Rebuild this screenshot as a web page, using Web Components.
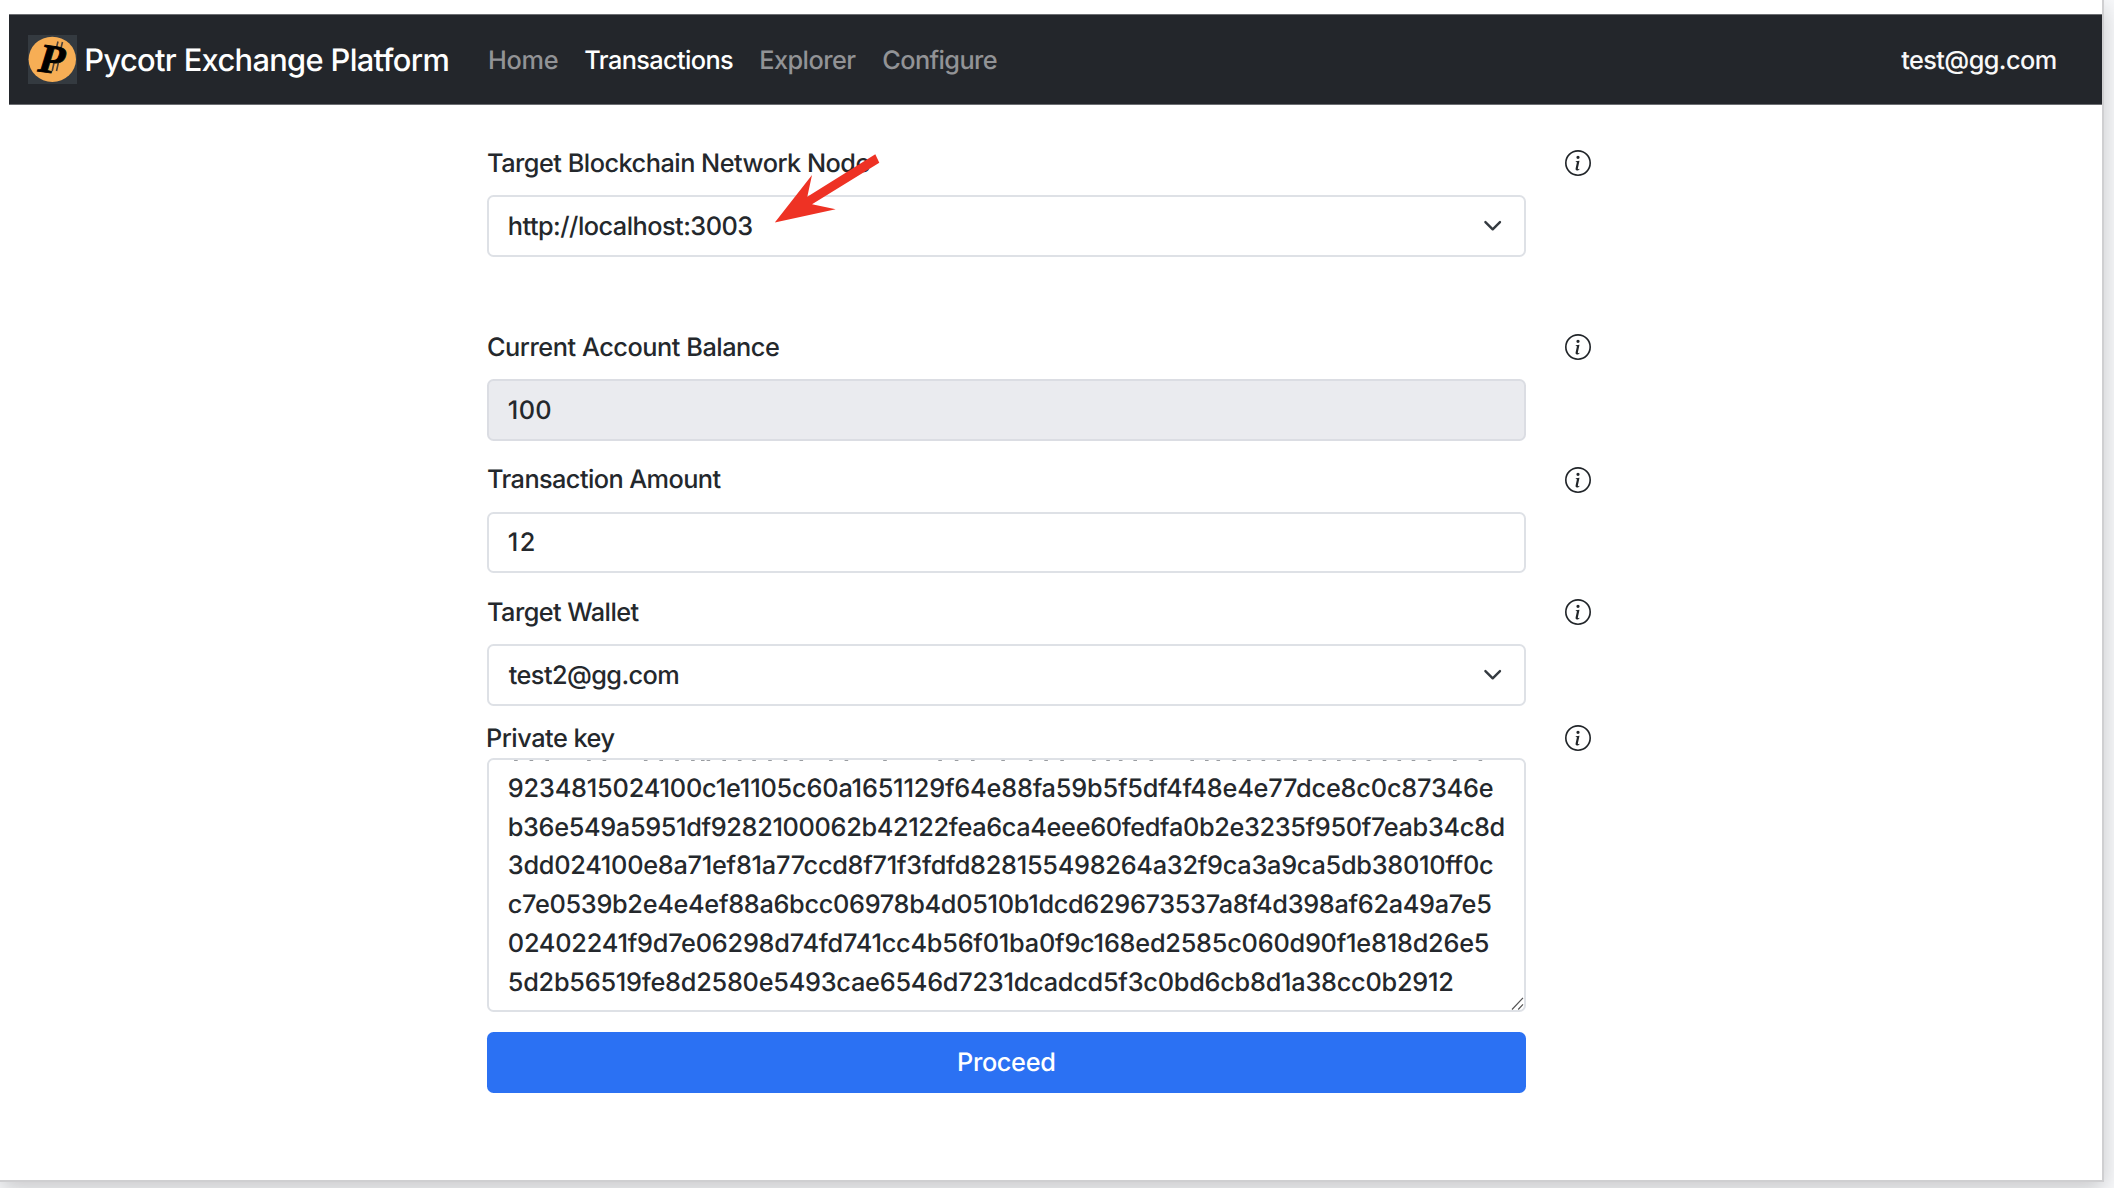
<!DOCTYPE html>
<html lang="en"><head><meta charset="utf-8"><title>Pycotr Exchange Platform</title>
<style>
html,body{margin:0;height:100%;overflow:hidden;background:#f8f9fb}
body{font:450 25.3px/38.77px Inter,sans-serif;color:#24282c;text-rendering:geometricPrecision}
</style></head><body>
<pycotr-app></pycotr-app>
<script>
const define=(name,html,init)=>customElements.define(name,class extends HTMLElement{
  connectedCallback(){
    if(this.shadowRoot)return;
    const t=document.createElement('template');t.innerHTML=typeof html==='function'?html(this):html;
    this.attachShadow({mode:'open'}).append(t.content.cloneNode(true));
    if(init)init(this);
  }
});

// Single line of text tracked to a given ink width.
const ctx=document.createElement('canvas').getContext('2d');
define('text-run','<style>:host{display:block;white-space:pre;font-kerning:normal;transform:translate(.7px,1.4px)}</style><slot></slot>',el=>{
  const cs=getComputedStyle(el),s=el.textContent,w=+el.getAttribute('w');
  ctx.font=`${cs.fontWeight} ${cs.fontSize} Inter, sans-serif`;
  const m=ctx.measureText(s),ls=(w-m.actualBoundingBoxLeft-m.actualBoundingBoxRight)/(s.length-1);
  el.style.letterSpacing=ls.toFixed(3)+'px';
  el.style.marginLeft=m.actualBoundingBoxLeft.toFixed(2)+'px';
  el.style.width=(w+4)+'px';
});

define('info-icon',`<style>:host{display:block;width:26px;height:26px}svg{display:block}</style>
<svg width="26" height="26" viewBox="0 0 16 16" fill="#212529"><path d="M8 15A7 7 0 1 1 8 1a7 7 0 0 1 0 14zm0 1A8 8 0 1 0 8 0a8 8 0 0 0 0 16z"/><path d="m8.93 6.588-2.29.287-.082.38.45.083c.294.07.352.176.288.469l-.738 3.468c-.194.897.105 1.319.808 1.319.545 0 1.178-.252 1.465-.598l.088-.416c-.2.176-.492.246-.686.246-.275 0-.375-.193-.304-.533L8.93 6.588zM9 4.5a1 1 0 1 1-2 0 1 1 0 0 1 2 0z"/></svg>`);

define('coin-logo',`<style>:host{display:block;width:48.6px;height:48.4px;background:#343a40}svg{display:block}</style>
<svg width="48.6" height="48.4" viewBox="0 0 48.6 48.4"><ellipse cx="24.3" cy="24.3" rx="23.7" ry="22.6" fill="#f7ae55"/>
<g stroke="#4a4038" stroke-width="1.6" fill="none"><path d="M30 6.5l-1.5 6M34.5 7l-1.5 6M26 28l-1.8 8M30.3 28l-1.8 8"/></g>
<text transform="translate(8.2 36) rotate(8) skewX(-9)" font-family="Liberation Serif,serif" font-weight="700" font-size="41" stroke="#000" stroke-width=".9">P</text></svg>`);

define('nav-link',`<style>:host{display:block;color:#929396}:host([active]){color:#fff}</style><slot></slot>`);

define('nav-bar',`<style>
:host{display:flex;align-items:center;height:91px;margin:14px 0 0 9px;padding:0 47px 0 19.4px;background:#23262b;box-sizing:border-box;border:solid #6c6e72;border-width:1px 0}
.brand{font-size:30.8px;color:#fff;margin:1px 0 0 8.7px;width:403.7px}
nav{display:flex;margin-top:1px}
.u{margin:1px 0 0 auto;color:#f8f8f8;width:154.5px}
</style><coin-logo></coin-logo><div class="brand"><text-run w="362">Pycotr Exchange Platform</text-run></div>
<nav>
<nav-link style="width:95.3px"><text-run w="67.6">Home</text-run></nav-link>
<nav-link active style="width:175.8px"><text-run w="147.7">Transactions</text-run></nav-link>
<nav-link style="width:122.1px"><text-run w="95.2">Explorer</text-run></nav-link>
<nav-link><text-run w="113.5">Configure</text-run></nav-link></nav>
<div class="u"><text-run w="154.5">test@gg.com</text-run></div>`);

define('form-field',el=>`<style>
:host{display:block}
.label{display:flex;align-items:center;justify-content:space-between;width:1103.7px;height:38.77px}
.label ::slotted(*){flex:none}
.box{display:flex;align-items:center;justify-content:space-between;box-sizing:border-box;width:1038.6px;height:61.4px;margin-top:12.7px;padding:0 21.4px 0 18.8px;border:2px solid #dee1e6;border-radius:6.5px;background:#fff}
:host([readonly]) .box{background:#eaebef;border-color:#dbdde3}
:host([area]) .box{margin-top:0;height:254.7px;display:block;padding:9.3px 0 0 18.8px;position:relative}
.marks{position:absolute;left:0;top:0}
.grip{position:absolute;right:0;bottom:0}
</style><div class="label"><slot name="label"></slot><info-icon></info-icon></div>
<div class="box"><slot></slot>${el.hasAttribute('select')?'<svg width="19.4" height="19.4" viewBox="0 0 16 16" fill="none" stroke="#343a40" stroke-width="2" stroke-linecap="round" stroke-linejoin="round"><path d="m2 5 6 6 6-6"/></svg>':''}${el.hasAttribute('area')?'<svg class="marks" width="1034" height="3" viewBox="489.3 759 1034 3"></svg><svg class="grip" width="13" height="13" viewBox="0 0 13 13" stroke="#555" stroke-width="1.2"><path d="M1 12.5L12 .8M7.2 12.5L12 7.4"/></svg>':''}</div>`,el=>{
  const g=el.shadowRoot.querySelector('.marks');
  if(!g)return;
  // Bottom edges of the line that is scrolled out above the first visible one.
  const a=[105,150,196,317,362,482,527,573,619,648,664,710,755,797,843,888,934,1020,1065,1177,1337,1385,1432,1520].map(x=>480+x/2.904);
  const b=[55,95,137,220,257,290,328,370,477,515,545,587,625,663,703,745,785,822,860,900,937,980,1018,1055,1097,1163,1230].map(x=>1010+x/2.613);
  const d=[...a,...b].map(x=>`M${(x-1.8).toFixed(1)} 759.5h3.6`).join('');
  g.innerHTML=`<path d="${d}" stroke="#9a9da1" stroke-width="1"/>`;
});

define('proceed-button',`<style>:host{display:flex;align-items:center;box-sizing:border-box;width:1038.6px;height:61.4px;margin-top:19.4px;padding-left:471px;border-radius:6.5px;background:#2b71f3;color:#fff}</style><text-run w="95.2">Proceed</text-run>`);

define('pointer-arrow',`<style>:host{position:absolute;left:770px;top:150px}svg{display:block}</style>
<svg width="115" height="80" viewBox="770 150 115 80"><path fill="#ee3224" d="M774.8 222.4L812 175l-4.7 21.7 68-42.4 4 8.4-67.3 41.5 23.7 5.1z"/></svg>`);

define('pycotr-app',`<style>
:host{position:relative;width:2102px;height:1180px;background:#fff;border:solid #cfcfd1;border-width:0 2px 2px 0;box-shadow:0 7px 22px rgba(0,0,0,.2);display:flex;flex-direction:column}
form{margin:39px 0 0 487.3px}
.s{margin-bottom:19.65px}.big{margin-bottom:71.1px}
</style><nav-bar></nav-bar><form>
<form-field select class="big"><text-run slot="label" w="381.5">Target Blockchain Network Node</text-run><text-run w="243.5">http://localhost:3003</text-run></form-field>
<form-field readonly class="s"><text-run slot="label" w="291">Current Account Balance</text-run><text-run w="41.5">100</text-run></form-field>
<form-field class="s"><text-run slot="label" w="233.5">Transaction Amount</text-run><text-run w="25">12</text-run></form-field>
<form-field select style="margin-bottom:13.1px"><text-run slot="label" w="151.5">Target Wallet</text-run><text-run w="169.5">test2@gg.com</text-run></form-field>
<form-field area><text-run slot="label" w="126.5">Private key</text-run>
<text-run w="984">9234815024100c1e1105c60a1651129f64e88fa59b5f5df4f48e4e77dce8c0c87346e</text-run>
<text-run w="994.7">b36e549a5951df9282100062b42122fea6ca4eee60fedfa0b2e3235f950f7eab34c8d</text-run>
<text-run w="984.2">3dd024100e8a71ef81a77ccd8f71f3fdfd828155498264a32f9ca3a9ca5db38010ff0c</text-run>
<text-run w="982.4">c7e0539b2e4e4ef88a6bcc06978b4d0510b1dcd629673537a8f4d398af62a49a7e5</text-run>
<text-run w="980">02402241f9d7e06298d74fd741cc4b56f01ba0f9c168ed2585c060d90f1e818d26e5</text-run>
<text-run w="943.5">5d2b56519fe8d2580e5493cae6546d7231dcadcd5f3c0bd6cb8d1a38cc0b2912</text-run>
</form-field>
<proceed-button></proceed-button></form><pointer-arrow></pointer-arrow>`);
</script></body></html>
